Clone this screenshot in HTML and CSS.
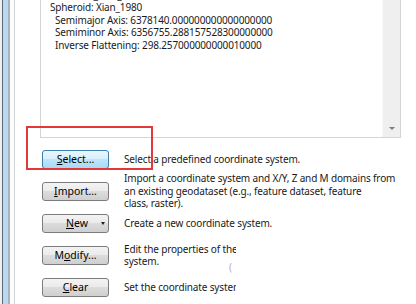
FILE: index.html
```html
<!DOCTYPE html>
<html lang="en">
<head>
    <meta charset="UTF-8">
    <title>Spatial Reference</title>
    <link rel="stylesheet" href="styles.css">
</head>
<body>
    <div class="dialog">
        <div class="edge"></div>
        <div class="main">
            <div class="details">
                <div class="details-text">
                    <div class="line">Datum: D_Xian_1980</div>
                    <div class="line">Spheroid: Xian_1980</div>
                    <div class="line sub">Semimajor Axis: 6378140.000000000000000000</div>
                    <div class="line sub">Semiminor Axis: 6356755.288157528300000000</div>
                    <div class="line sub">Inverse Flattening: 298.257000000000010000</div>
                </div>
                <div class="scrollbar">
                    <span class="arrow-down"></span>
                </div>
            </div>
            <div class="actions">
                <button class="btn default"><u>S</u>elect...</button>
                <p class="desc">Select a predefined coordinate system.</p>

                <button class="btn"><u>I</u>mport...</button>
                <p class="desc">Import a coordinate system and X/Y, Z and M domains from<br>an existing geodataset (e.g., feature dataset, feature<br>class, raster).</p>

                <button class="btn split"><span><u>N</u>ew</span><span class="caret"></span></button>
                <p class="desc">Create a new coordinate system.</p>

                <button class="btn">M<u>o</u>dify...</button>
                <p class="desc">Edit the properties of the currently selected coordinate<br>system.</p>

                <button class="btn"><u>C</u>lear</button>
                <p class="desc">Set the coordinate system to Unknown.</p>
            </div>
        </div>
        <div class="highlight"></div>
        <div class="cover"></div>
        <span class="cursor">(</span>
    </div>
</body>
</html>
```

FILE: styles.css
```css
body {
    margin: 0;
    width: 416px;
    height: 304px;
    overflow: hidden;
    background: #fff;
    font-family: "Noto Sans", sans-serif;
    font-size: 10px;
    letter-spacing: -0.15px;
    color: #1a1a1a;
}
.dialog {
    position: relative;
    display: flex;
    height: 304px;
}
.edge {
    width: 15px;
    flex: none;
    background: linear-gradient(to right,
        #eef0f2 0 2px, #5d6873 2px 3px, #bad9f1 3px 8px,
        #aab2ba 8px 10px, #fcfcfc 10px 14px, #d4d4d4 14px 15px);
}
.main {
    flex: 1;
    padding-left: 25px;
}
.details {
    display: flex;
    width: 359px;
    height: 158px;
    margin-top: -22px;
    border: 1px solid #d4d4d4;
}
.details-text {
    flex: 1;
    padding: 10px 0 0 9px;
    line-height: 12.4px;
    white-space: nowrap;
    overflow: hidden;
}
.line.sub {
    padding-left: 5px;
}
.scrollbar {
    width: 18px;
    display: flex;
    align-items: flex-end;
    justify-content: center;
    padding-bottom: 7px;
    box-sizing: border-box;
    background: #efefef;
    border-left: 1px solid #f8f8f8;
}
.arrow-down {
    width: 0;
    height: 0;
    border-left: 3px solid transparent;
    border-right: 3px solid transparent;
    border-top: 3px solid #7a7a7a;
}
.actions {
    display: grid;
    grid-template-columns: 67px 1fr;
    grid-auto-rows: 32px;
    column-gap: 15px;
    align-items: center;
    margin: 5px 0 0 2px;
}
.desc {
    margin: 0;
    line-height: 12.5px;
    white-space: nowrap;
}
.btn {
    width: 67px;
    height: 19px;
    padding: 0;
    font: inherit;
    font-size: 10.5px;
    letter-spacing: 0;
    color: #000;
    border: 1px solid #7c7c7c;
    border-radius: 3px;
    background: linear-gradient(#f3f3f3, #ebebeb 45%, #dcdcdc 50%, #cfcfcf);
}
.btn.default {
    border-color: #3c7fb1;
    background: linear-gradient(#eaf6fd, #d9f0fc 45%, #bee6fd 50%, #a7d9f5);
}
.btn.split {
    display: flex;
    align-items: center;
    justify-content: space-between;
    padding: 0 3px 0 23px;
}
.caret {
    width: 0;
    height: 0;
    border-left: 2.5px solid transparent;
    border-right: 2.5px solid transparent;
    border-top: 3px solid #222;
}
.highlight {
    position: absolute;
    left: 26px;
    top: 126px;
    width: 127px;
    height: 44px;
    box-sizing: border-box;
    border: 2px solid #e2383a;
}
.cover {
    position: absolute;
    left: 236px;
    top: 237px;
    right: 0;
    bottom: 0;
    background: #fff;
}
.cursor {
    position: absolute;
    left: 229px;
    top: 260px;
    font-size: 10px;
    color: #b4b4b4;
}
```
